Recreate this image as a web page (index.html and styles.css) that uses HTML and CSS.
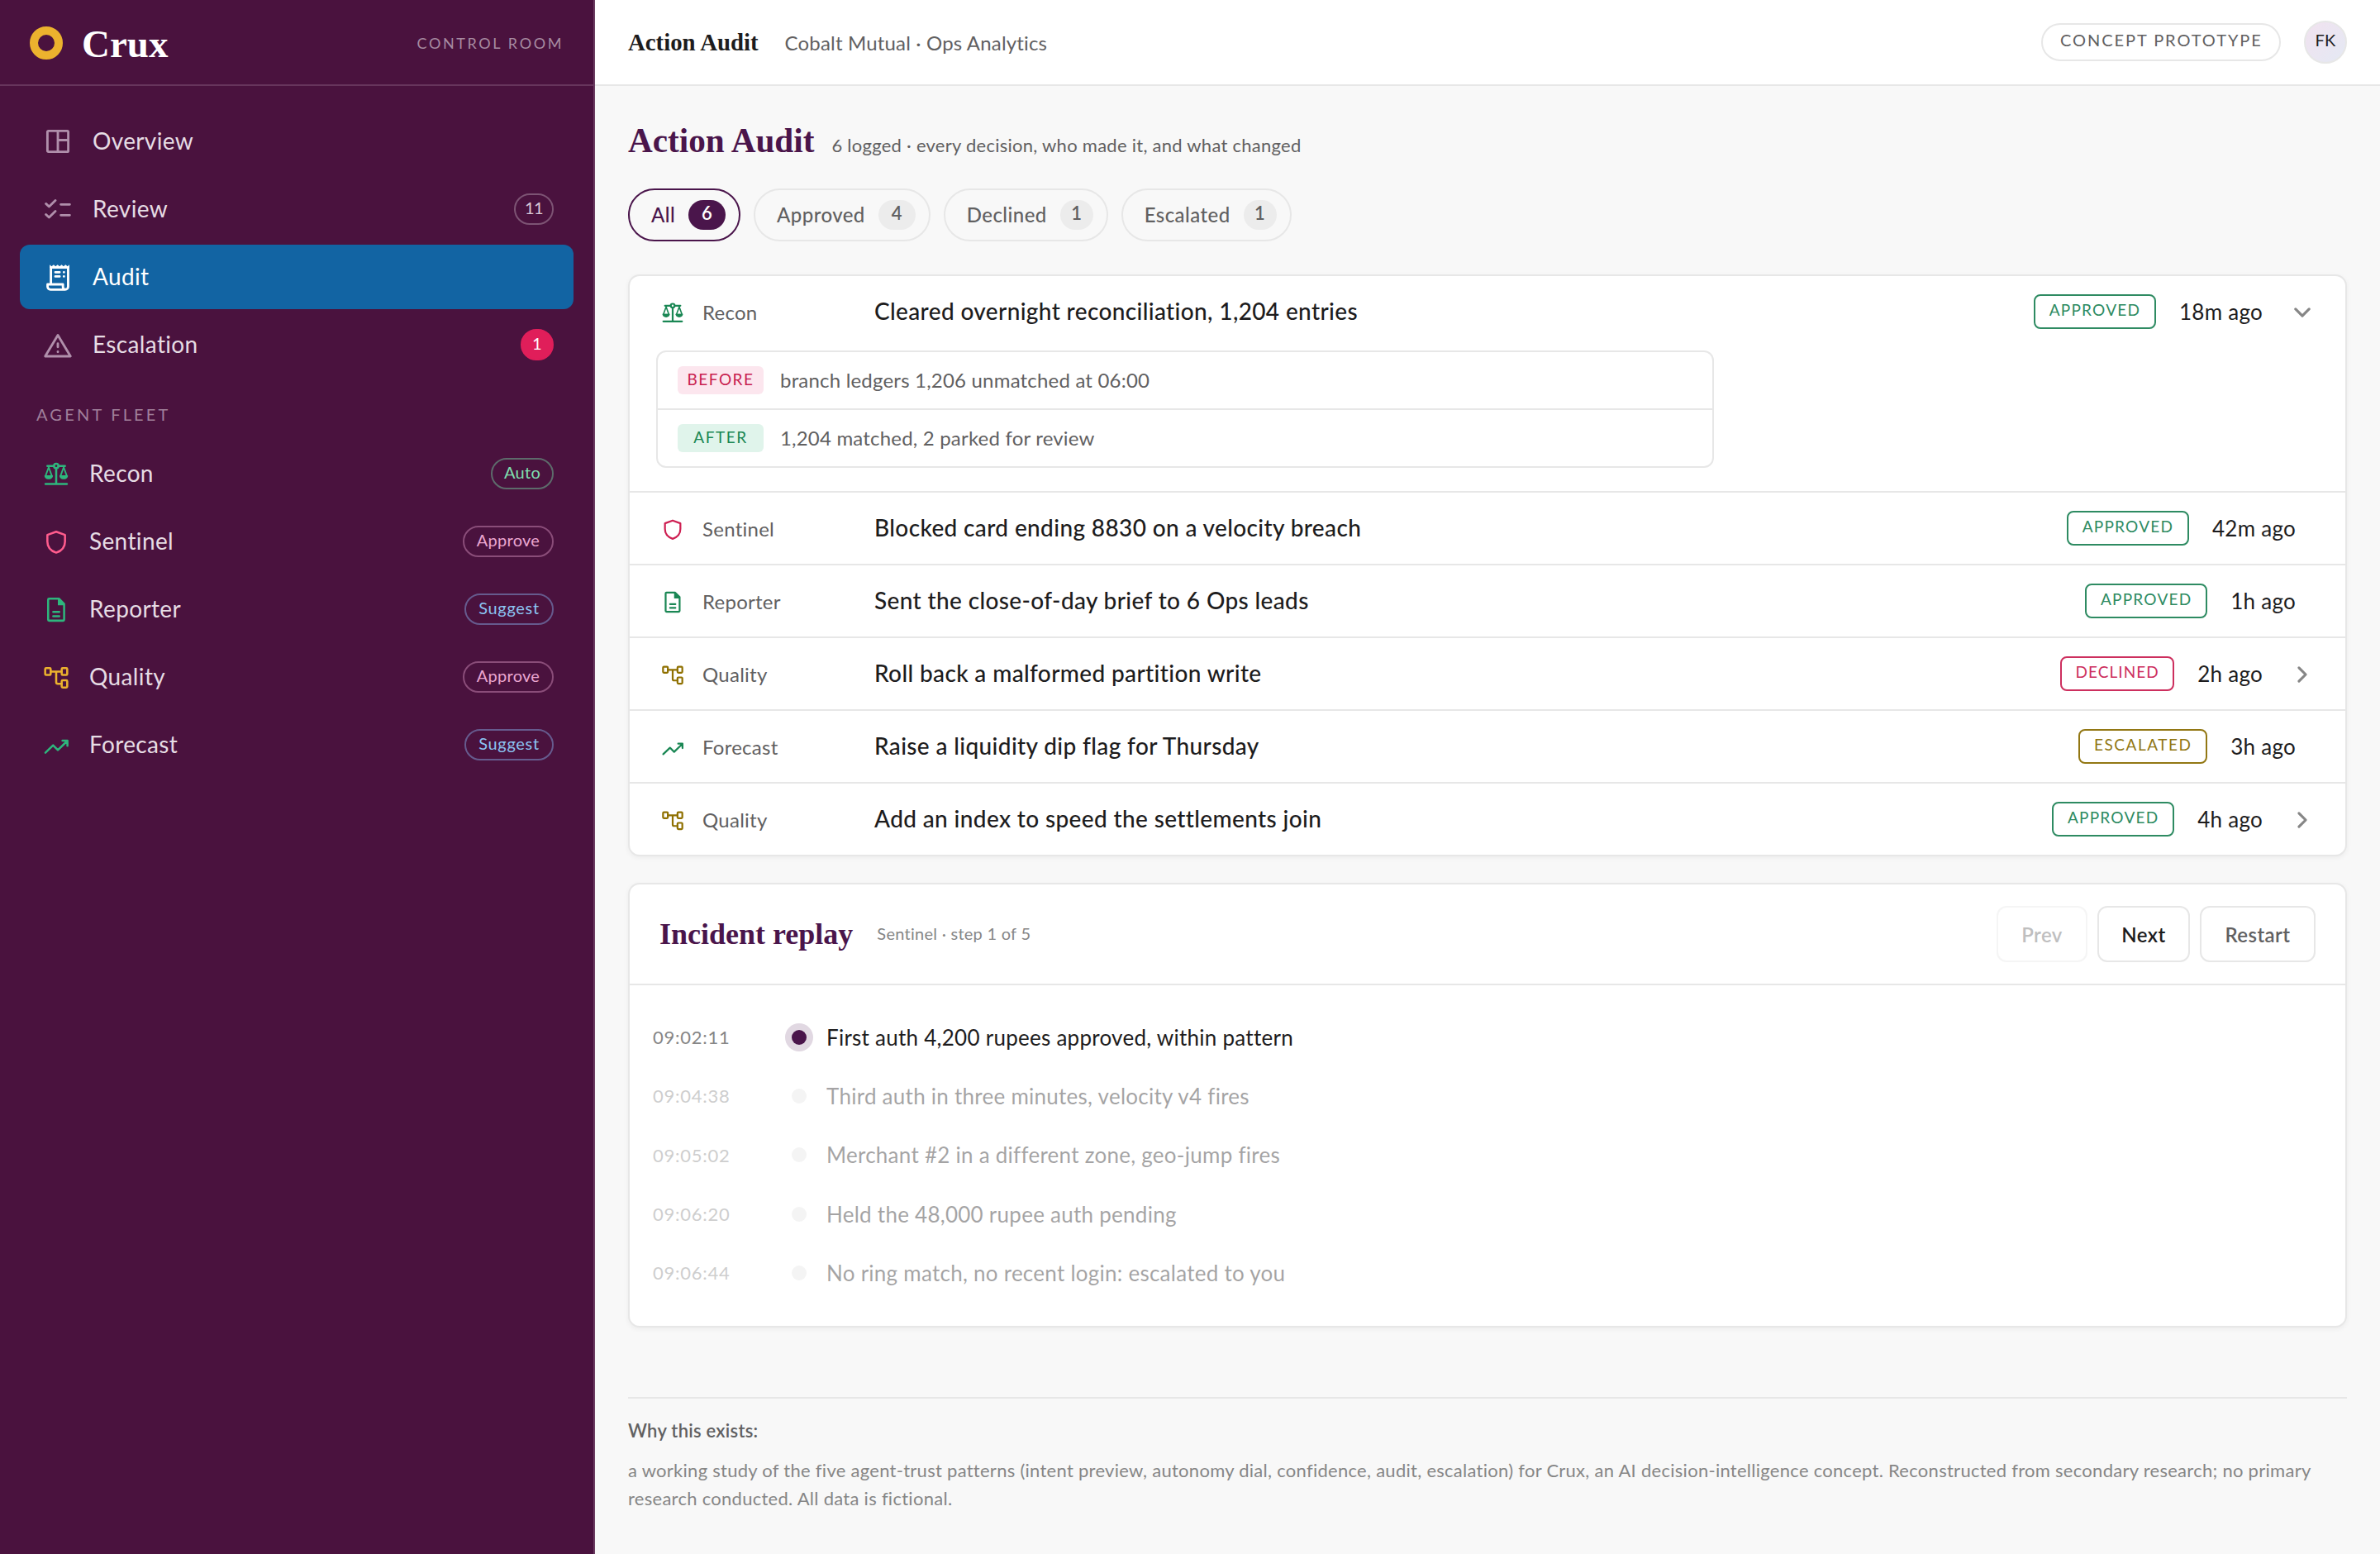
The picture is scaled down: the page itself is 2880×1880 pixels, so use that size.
FILE: index.html
```html
<!DOCTYPE html>
<html lang="en">
<head>
<meta charset="utf-8">
<title>Crux · Action Audit</title>
<link rel="stylesheet" href="styles.css">
</head>
<body>
<svg class="sprite" width="0" height="0" aria-hidden="true">
  <symbol id="i-overview" viewBox="0 0 24 24"><rect x="3.6" y="3.6" width="16.8" height="16.8" rx="0.8"/><path d="M12 4v16M12 11h8"/></symbol>
  <symbol id="i-review" viewBox="0 0 24 24"><path d="M2.4 7.6l2.5 2.4 5.1-5M2.4 16.3l2.5 2.4 5.1-5M14.4 8.2h7.2M14.4 16.9h7.2"/></symbol>
  <symbol id="i-audit" viewBox="0 0 24 24"><path d="M6.4 17V4.4h13.9v15.4a2.4 2.4 0 0 1-2.4 2.4H6a2.3 2.3 0 0 1-2.3-2.3V18h12.4v2.1a2 2 0 0 0 2 2M10 8.2h3.4M10 11.6h3.4M16.9 8.2h.01M16.9 11.6h.01"/><path class="solid" d="M5.4 4.6V2.2l1.6 1.3 1.6-1.3 1.6 1.3 1.6-1.3 1.6 1.3L15 2.2l1.6 1.3 1.6-1.3 1.6 1.3 1.5-1.3v2.4z"/></symbol>
  <symbol id="i-escalation" viewBox="0 0 24 24"><path d="M12 4.3L1.8 21.3h20.400zM12 11.100v2.800M12 17.600v.2"/></symbol>
  <symbol id="i-recon" viewBox="0 0 24 24"><path d="M2.300 21.300h19.400M12 7.200v14M4 5h5.800M14.200 5H20"/><circle cx="12" cy="5" r="2"/><path class="thin" d="M5.200 6.200l-2.900 8h5.800zM18.800 6.200l-2.900 8h5.800z"/><path class="solid" d="M1.300 13.600h7.800c0 2-1.600 3.500-3.900 3.500s-3.900-1.500-3.900-3.500zM14.900 13.600h7.800c0 2-1.600 3.500-3.900 3.500s-3.900-1.500-3.900-3.500z"/></symbol>
  <symbol id="i-sentinel" viewBox="0 0 24 24"><path d="M12 3.200l8 2.900v6c0 5-3.300 8.500-8 10.100-4.700-1.600-8-5.100-8-10.100v-6z"/></symbol>
  <symbol id="i-reporter" viewBox="0 0 24 24"><path d="M5.600 2.500h9l4.600 4.700v14.300a.9.9 0 0 1-.9.900H5.600a.9.900 0 0 1-.9-.9V3.400a.9.9 0 0 1 .9-.9zM9.300 14.500h5.500M9.300 18.400h5.500"/><path class="solid" d="M13.500 2v6.500h6.300z"/></symbol>
  <symbol id="i-quality" viewBox="0 0 24 24"><rect x="2" y="4" width="5" height="6.200" rx="0.900"/><rect x="17" y="4" width="5" height="6.200" rx="0.900"/><rect x="17" y="15" width="5" height="6.500" rx="0.900"/><path d="M7 7.200h10M12 7.200v9.500a1.500 1.500 0 0 0 1.500 1.500H17"/></symbol>
  <symbol id="i-forecast" viewBox="0 0 24 24"><path d="M2.200 19.200l7-6.700 4.300 4.300 8.300-8M17.700 8.300h4.500v4.600"/></symbol>
  <symbol id="i-right" viewBox="0 0 24 24"><path d="M8.500 5l7 7-7 7"/></symbol>
  <symbol id="i-down" viewBox="0 0 24 24"><path d="M5 8.500l7 7 7-7"/></symbol>
</svg>

<div class="app">
  <aside class="sidebar">
    <div class="brand"><span class="ring"></span><span class="brand-name">Crux</span><span class="brand-tag">CONTROL ROOM</span></div>
    <nav class="nav">
      <a class="nav-item"><svg class="icon"><use href="#i-overview"/></svg><span class="nav-label">Overview</span></a>
      <a class="nav-item"><svg class="icon"><use href="#i-review"/></svg><span class="nav-label">Review</span><span class="badge count">11</span></a>
      <a class="nav-item active"><svg class="icon"><use href="#i-audit"/></svg><span class="nav-label">Audit</span></a>
      <a class="nav-item"><svg class="icon"><use href="#i-escalation"/></svg><span class="nav-label">Escalation</span><span class="badge alert">1</span></a>
    </nav>
    <div class="section-label">AGENT FLEET</div>
    <nav class="nav agents">
      <a class="nav-item"><svg class="icon green"><use href="#i-recon"/></svg><span class="nav-label">Recon</span><span class="badge auto">Auto</span></a>
      <a class="nav-item"><svg class="icon pink"><use href="#i-sentinel"/></svg><span class="nav-label">Sentinel</span><span class="badge approve">Approve</span></a>
      <a class="nav-item"><svg class="icon green"><use href="#i-reporter"/></svg><span class="nav-label">Reporter</span><span class="badge suggest">Suggest</span></a>
      <a class="nav-item"><svg class="icon yellow"><use href="#i-quality"/></svg><span class="nav-label">Quality</span><span class="badge approve">Approve</span></a>
      <a class="nav-item"><svg class="icon green"><use href="#i-forecast"/></svg><span class="nav-label">Forecast</span><span class="badge suggest">Suggest</span></a>
    </nav>
  </aside>

  <div class="content">
    <header class="topbar">
      <span class="topbar-title">Action Audit</span><span class="crumb">Cobalt Mutual · Ops Analytics</span>
      <span class="concept">CONCEPT PROTOTYPE</span><span class="avatar">FK</span>
    </header>

    <main class="main">
      <div class="heading"><h1>Action Audit</h1><p>6 logged · every decision, who made it, and what changed</p></div>
      <div class="filters">
        <button class="filter selected"><span>All</span><b>6</b></button>
        <button class="filter"><span>Approved</span><b>4</b></button>
        <button class="filter"><span>Declined</span><b class="slim">1</b></button>
        <button class="filter"><span>Escalated</span><b class="slim">1</b></button>
      </div>

      <section class="card log">
        <div class="entry">
          <div class="row"><svg class="icon dgreen"><use href="#i-recon"/></svg><span class="agent">Recon</span><span class="action">Cleared overnight reconciliation, 1,204 entries</span><span class="status approved">APPROVED</span><span class="ago">18m ago</span><svg class="chev"><use href="#i-down"/></svg></div>
          <div class="diff">
            <div class="diff-row"><span class="tag before">BEFORE</span><span class="diff-text">branch ledgers 1,206 unmatched at 06:00</span></div>
            <div class="diff-row"><span class="tag after">AFTER</span><span class="diff-text">1,204 matched, 2 parked for review</span></div>
          </div>
        </div>
        <div class="entry"><div class="row"><svg class="icon dred"><use href="#i-sentinel"/></svg><span class="agent">Sentinel</span><span class="action">Blocked card ending 8830 on a velocity breach</span><span class="status approved">APPROVED</span><span class="ago last">42m ago</span></div></div>
        <div class="entry"><div class="row"><svg class="icon dgreen"><use href="#i-reporter"/></svg><span class="agent">Reporter</span><span class="action">Sent the close-of-day brief to 6 Ops leads</span><span class="status approved">APPROVED</span><span class="ago last">1h ago</span></div></div>
        <div class="entry"><div class="row"><svg class="icon gold"><use href="#i-quality"/></svg><span class="agent">Quality</span><span class="action">Roll back a malformed partition write</span><span class="status declined">DECLINED</span><span class="ago">2h ago</span><svg class="chev"><use href="#i-right"/></svg></div></div>
        <div class="entry"><div class="row"><svg class="icon dgreen"><use href="#i-forecast"/></svg><span class="agent">Forecast</span><span class="action">Raise a liquidity dip flag for Thursday</span><span class="status escalated">ESCALATED</span><span class="ago last">3h ago</span></div></div>
        <div class="entry"><div class="row"><svg class="icon gold"><use href="#i-quality"/></svg><span class="agent">Quality</span><span class="action">Add an index to speed the settlements join</span><span class="status approved">APPROVED</span><span class="ago">4h ago</span><svg class="chev"><use href="#i-right"/></svg></div></div>
      </section>

      <section class="card replay">
        <div class="replay-head">
          <h2>Incident replay</h2><span class="replay-sub">Sentinel · step 1 of 5</span>
          <div class="controls"><button class="btn disabled">Prev</button><button class="btn primary">Next</button><button class="btn">Restart</button></div>
        </div>
        <ol class="steps">
          <li class="step current"><time>09:02:11</time><i class="dot"></i><span class="step-text">First auth 4,200 rupees approved, within pattern</span></li>
          <li class="step"><time>09:04:38</time><i class="dot"></i><span class="step-text">Third auth in three minutes, velocity v4 fires</span></li>
          <li class="step"><time>09:05:02</time><i class="dot"></i><span class="step-text">Merchant #2 in a different zone, geo-jump fires</span></li>
          <li class="step"><time>09:06:20</time><i class="dot"></i><span class="step-text">Held the 48,000 rupee auth pending</span></li>
          <li class="step"><time>09:06:44</time><i class="dot"></i><span class="step-text">No ring match, no recent login: escalated to you</span></li>
        </ol>
      </section>

      <footer class="footer">
        <strong>Why this exists:</strong>
        <p>a working study of the five agent-trust patterns (intent preview, autonomy dial, confidence, audit, escalation) for Crux, an AI decision-intelligence concept. Reconstructed from secondary research; no primary<br>research conducted. All data is fictional.</p>
      </footer>
    </main>
  </div>
</div>
</body>
</html>
```

FILE: styles.css
```css
* { box-sizing: border-box; }
body {
  margin: 0;
  font-family: Lato, "Open Sans", sans-serif;
  font-size: 24px;
  letter-spacing: 0.011em;
  color: #1d1c1d;
  background: #f8f8f8;
}
button { font: inherit; letter-spacing: inherit; color: inherit; background: none; margin: 0; }
h1, h2, p, ol { margin: 0; padding: 0; }
.sprite { position: absolute; }
svg { fill: none; stroke: currentColor; stroke-width: 1.9; stroke-linecap: round; stroke-linejoin: round; flex: none; }
.solid { fill: currentColor; stroke: none; }
.thin { stroke-width: 1.4; }

.app { display: flex; width: 2880px; height: 1880px; }

/* Sidebar */
.sidebar { width: 720px; flex: none; background: #4a123e; border-right: 2px solid #6a3b60; color: #e6dce4; }
.brand { display: flex; align-items: center; height: 104px; padding: 0 36px; border-bottom: 2px solid #67355c; }
.ring { width: 40px; height: 40px; margin-top: 2px; border: 10px solid #ecb22e; border-radius: 50%; }
.brand-name { margin-left: 23px; padding-top: 3px; font: bold 47px "Liberation Serif", serif; letter-spacing: 0; color: #fff; }
.brand-tag { margin-left: auto; padding-top: 1px; font-size: 18px; letter-spacing: 0.145em; color: #a78ba1; }
.nav { display: flex; flex-direction: column; gap: 4px; padding: 28px 24px 0; }
.nav-item { display: flex; align-items: center; gap: 24px; height: 78px; padding: 0 24px 0 28px; border-radius: 12px; }
.nav-item .icon { width: 36px; height: 36px; color: #b08fab; }
.nav-label { flex: 1; padding-bottom: 2px; font-size: 28px; letter-spacing: 0.013em; }
.nav-item.active { background: #1264a3; color: #fff; }
.nav-item.active .icon { color: #fff; }
.badge { width: 110px; height: 38px; border: 2px solid #7d5474; border-radius: 19px; font-size: 20px; line-height: 30px; letter-spacing: 0.014em; text-align: center; color: #d9c9d6; }
.badge.count { width: 48px; letter-spacing: -0.03em; }
.badge.alert { width: 40px; background: #e01e5a; border-color: #e01e5a; color: #fff; }
.section-label { padding: 33px 44px 0; height: 50px; font-size: 20px; line-height: 24px; letter-spacing: 0.16em; color: #a07f9a; }
.agents { padding-top: 28px; }
.agents .icon { width: 32px; height: 32px; }
.nav-item .icon.green { color: #2eb67d; }
.nav-item .icon.pink { color: #ff5c8d; }
.nav-item .icon.yellow { color: #ecb22e; }
.badge.auto { width: 76px; color: #7fe0b0; border-color: #5d6b6b; }
.badge.approve { color: #eba6d0; border-color: #8a4d79; }
.badge.suggest { width: 108px; letter-spacing: 0.035em; color: #8cc4f2; border-color: #665b8e; }

/* Top bar */
.content { flex: 1; display: flex; flex-direction: column; }
.topbar { display: flex; align-items: center; height: 104px; padding: 0 40px; background: #fff; border-bottom: 2px solid #e7e7e7; }
.topbar-title { font: bold 28.8px "Liberation Serif", serif; letter-spacing: 0; }
.crumb { margin-left: 32px; font-size: 24px; letter-spacing: 0.007em; color: #616061; }
.concept { margin-left: auto; width: 290px; height: 46px; padding-left: 21px; border: 2px solid #e7e7e7; border-radius: 23px; font-size: 20px; line-height: 37px; letter-spacing: 0.097em; color: #616061; }
.avatar { width: 52px; height: 52px; margin-left: 28px; border: 2px solid #e7e7e7; border-radius: 50%; background: linear-gradient(135deg, #f1e2ef, #e4e9f4); font-size: 20px; line-height: 42px; text-align: center; }

/* Page heading and filters */
.main { padding: 42px 40px 0; }
.heading { display: flex; align-items: baseline; gap: 21px; height: 48px; }
h1 { font: bold 41.2px/48px "Liberation Serif", serif; letter-spacing: 0; color: #4a154b; }
.heading p { font-size: 22px; letter-spacing: 0.012em; color: #616061; }
.filters { display: flex; gap: 16px; margin-top: 34px; }
.filter { display: flex; align-items: center; gap: 16px; height: 64px; padding: 0 16px 0 26px; border: 2px solid #e7e7e7; border-radius: 32px; color: #616061; }
.filter span { padding-bottom: 2px; font-weight: 500; letter-spacing: 0.018em; }
.filter b { width: 45px; height: 36px; border-radius: 18px; background: #ececec; font-size: 22px; font-weight: 600; line-height: 32px; text-align: center; }
.filter b.slim { width: 40px; }
.filter.selected { border-color: #4a154b; color: #4a154b; }
.filter.selected b { background: #4a154b; color: #fff; }

/* Cards */
.card { background: #fff; border: 2px solid #e7e7e7; border-radius: 14px; box-shadow: 0 2px 6px rgba(0, 0, 0, 0.05); }
.log { margin-top: 40px; }
.entry + .entry { border-top: 2px solid #e7e7e7; }
.row { display: flex; align-items: center; height: 86px; padding-right: 38px; padding-left: 38px; }
.row .icon { width: 28px; height: 28px; margin-top: 2px; }
.dgreen { color: #1a8754; }
.dred { color: #ce1f52; }
.gold { color: #8f7000; }
.agent { width: 208px; margin-left: 22px; color: #616061; }
.action { flex: 1; padding-bottom: 2px; font-size: 28px; font-weight: 500; letter-spacing: 0.013em; }
.status { width: 148px; height: 42px; border: 2px solid; border-radius: 8px; font-size: 19px; line-height: 33px; letter-spacing: 0.066em; text-align: center; }
.status.approved { color: #2e8b62; }
.status.declined { width: 138px; color: #cd2f5e; letter-spacing: 0.055em; }
.status.escalated { width: 156px; color: #927713; letter-spacing: 0.08em; }
.ago { margin-left: 28px; margin-right: 34px; font-size: 26px; }
.ago.last { margin-right: 22px; }
.chev { width: 28px; height: 28px; margin-top: 2px; color: #868686; stroke-width: 2.7; }
.diff { width: 1280px; margin: 4px 0 28px 32px; border: 2px solid #e7e7e7; border-radius: 12px; }
.diff-row { display: flex; align-items: center; height: 68px; padding-left: 24px; }
.diff-row + .diff-row { height: 70px; border-top: 2px solid #e7e7e7; }
.tag { width: 104px; height: 34px; border-radius: 6px; font-size: 19px; line-height: 31px; letter-spacing: 0.08em; text-align: center; }
.before { background: #fce6ee; color: #c81e50; }
.after { background: #e0f4eb; color: #1a8754; }
.diff-text { margin-left: 20px; padding-bottom: 2px; letter-spacing: 0.008em; color: #616061; }

/* Incident replay */
.replay { margin-top: 32px; }
.replay-head { display: flex; align-items: center; height: 122px; padding: 0 36px; border-bottom: 2px solid #e7e7e7; }
h2 { font: bold 36px "Liberation Serif", serif; letter-spacing: 0; color: #4a154b; }
.replay-sub { margin-left: 29px; padding-bottom: 2px; font-size: 20px; color: #868686; }
.controls { display: flex; gap: 12px; margin-left: auto; }
.btn { width: 140px; height: 68px; padding: 0; border: 2px solid #e7e7e7; border-radius: 12px; font-weight: 600; letter-spacing: 0.018em; color: #616061; }
.btn.primary { width: 112px; color: #1d1c1d; }
.btn.disabled { width: 110px; opacity: 0.4; }
.steps { height: 412px; padding: 27px 28px 0; list-style: none; }
.step { display: flex; align-items: center; height: 71.3px; }
.step time { width: 168px; font-size: 22px; letter-spacing: 0.034em; color: #868686; }
.dot { width: 18px; height: 18px; border-radius: 50%; background: #e4e4e4; }
.step-text { margin-left: 24px; font-size: 26px; letter-spacing: 0.01em; }
.step:not(.current) > * { opacity: 0.4; }
.step.current .dot { background: #4a154b; box-shadow: 0 0 0 8px #e1d8e2; }

/* Footer */
.footer { margin-top: 84px; padding-top: 22px; border-top: 2px solid #e7e7e7; font-size: 22px; line-height: 34px; color: #868686; }
.footer strong { display: block; font-weight: 600; color: #616061; }
.footer p { margin-top: 14px; letter-spacing: 0.0125em; white-space: nowrap; }
```
